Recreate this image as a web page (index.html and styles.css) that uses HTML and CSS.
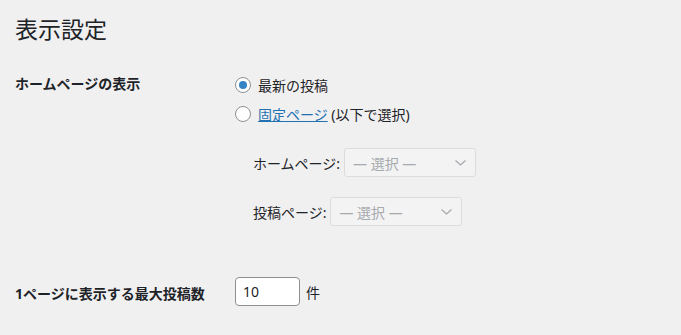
FILE: index.html
```html
<!DOCTYPE html>
<html lang="ja">
<head>
    <meta charset="UTF-8">
    <meta name="viewport" content="width=device-width, initial-scale=1.0">
    <title>表示設定</title>
    <link rel="stylesheet" href="styles.css">
</head>
<body>

    <h1>表示設定</h1>

    <div class="form-row first">
        <div class="row-label">ホームページの表示</div>
        <div class="row-field">
            <label class="option">
                <span class="radio checked"></span>最新の投稿
            </label>
            <label class="option">
                <span class="radio"></span><a href="#">固定ページ</a>&nbsp;(以下で選択)
            </label>
            <ul class="page-list">
                <li>
                    ホームページ:
                    <div class="select">
                        <span>— 選択 —</span>
                        <svg width="11" height="6" viewBox="0 0 11 6"><path d="M0.5 0.5 L5.5 5 L10.5 0.5" fill="none" stroke="#a7aaad" stroke-width="1.3"/></svg>
                    </div>
                </li>
                <li>
                    投稿ページ:
                    <div class="select">
                        <span>— 選択 —</span>
                        <svg width="11" height="6" viewBox="0 0 11 6"><path d="M0.5 0.5 L5.5 5 L10.5 0.5" fill="none" stroke="#a7aaad" stroke-width="1.3"/></svg>
                    </div>
                </li>
            </ul>
        </div>
    </div>

    <div class="form-row second">
        <div class="row-label">1ページに表示する最大投稿数</div>
        <div class="row-field inline">
            <input type="text" class="small-text" value="10">
            <span class="unit">件</span>
        </div>
    </div>

</body>
</html>
```

FILE: styles.css
```css
body {
    margin: 0;
    padding: 0 15px;
    background-color: #f0f0f1;
    color: #1d2327;
    font-family: "Noto Sans", "Noto Sans CJK JP", sans-serif;
    font-size: 14px;
}
h1 {
    margin: 0;
    padding-top: 14px;
    font-size: 23px;
    font-weight: 400;
    line-height: 30px;
}
.form-row {
    display: flex;
}
.form-row.first {
    margin-top: 26px;
}
.form-row.second {
    margin-top: 31px;
}
.row-label {
    width: 220px;
    flex-shrink: 0;
    font-weight: 700;
    line-height: 20px;
    padding-top: 4px;
}
.second .row-label {
    padding-top: 7px;
}
.row-field {
    flex: 1;
}
.row-field.inline {
    display: flex;
    align-items: center;
    height: 29px;
}
.option {
    display: flex;
    align-items: center;
    height: 29px;
}
.radio {
    width: 14px;
    height: 14px;
    border: 1px solid #8c8f94;
    border-radius: 50%;
    background-color: #fff;
    margin-right: 7px;
    position: relative;
}
.radio.checked::after {
    content: "";
    position: absolute;
    left: 3px;
    top: 3px;
    width: 8px;
    height: 8px;
    border-radius: 50%;
    background-color: #3582c4;
}
a {
    color: #2271b1;
    text-decoration: underline;
}
.page-list {
    list-style: none;
    margin: 20px 0 0 18px;
    padding: 0;
}
.page-list li {
    display: flex;
    align-items: center;
    height: 29px;
    margin-bottom: 20px;
}
.select {
    display: flex;
    align-items: center;
    justify-content: space-between;
    box-sizing: border-box;
    width: 132px;
    height: 29px;
    margin-left: 4px;
    padding: 0 9px 0 8px;
    border: 1px solid #dcdcde;
    border-radius: 3px;
    background-color: #f3f3f4;
    color: #a7aaad;
}
.small-text {
    box-sizing: border-box;
    width: 65px;
    height: 29px;
    padding: 0 7px;
    border: 1px solid #8c8f94;
    border-radius: 4px;
    background-color: #fff;
    color: #1d2327;
    font-family: inherit;
    font-size: 14px;
}
.unit {
    margin-left: 6px;
}
```
